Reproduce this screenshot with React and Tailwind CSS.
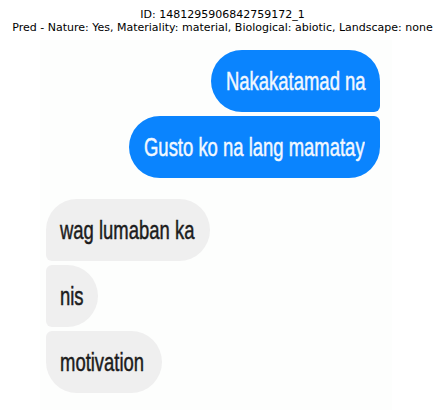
import React from 'react';

const sent = [
    { text: 'Nakakatamad na', width: 'w-[169px]', corners: 'rounded-l-[31px] rounded-tr-[31px] rounded-br-[6px]' },
    { text: 'Gusto ko na lang mamatay', width: 'w-[251px]', corners: 'rounded-l-[31px] rounded-tr-[6px] rounded-br-[31px]' },
];

const received = [
    { text: 'wag lumaban ka', width: 'w-[164px]', corners: 'rounded-r-[31px] rounded-tl-[31px] rounded-bl-[6px]' },
    { text: 'nis', width: 'w-[52px]', corners: 'rounded-r-[31px] rounded-l-[6px]' },
    { text: 'motivation', width: 'w-[116px]', corners: 'rounded-r-[31px] rounded-tl-[6px] rounded-bl-[31px]' },
];

// the screenshot font is a narrow grotesque, so squeeze Liberation Sans
const Label = ({ children }) => (
    <span className="inline-block origin-left scale-x-[0.71] whitespace-nowrap font-['Liberation_Sans',sans-serif] text-[26px] leading-none [-webkit-text-stroke:0.5px_currentColor]">
        {children}
    </span>
);

const App = () => {
    return (
        <div className="w-[445px] h-[418px] bg-white overflow-hidden">
            {/* figure title */}
            <div className="pt-[8px] text-center text-[11px] leading-[13px] text-black font-['DejaVu_Sans',sans-serif]">
                <div>ID: 1481295906842759172_1</div>
                <div>Pred - Nature: Yes, Materiality: material, Biological: abiotic, Landscape: none</div>
            </div>

            {/* screenshot */}
            <div className="ml-[40px] mt-[6px] w-[352px] h-[370px] bg-[#fdfefd] flex flex-col">
                <div className="flex flex-col items-end gap-[4px] pr-[12px] pt-[10px]">
                    {sent.map((m, i) => (
                        <div
                            key={i}
                            className={`h-[62px] pl-[15px] flex items-center overflow-hidden bg-[#0a84fe] text-[#f2f8ff] ${m.width} ${m.corners}`}
                        >
                            <Label>{m.text}</Label>
                        </div>
                    ))}
                </div>

                <div className="flex flex-col items-start gap-[4px] pl-[6px] mt-[21px]">
                    {received.map((m, i) => (
                        <div
                            key={i}
                            className={`h-[62px] pl-[14px] flex items-center overflow-hidden bg-[#efefef] text-[#1c1c1c] ${m.width} ${m.corners}`}
                        >
                            <Label>{m.text}</Label>
                        </div>
                    ))}
                </div>
            </div>
        </div>
    );
};

export default App;
